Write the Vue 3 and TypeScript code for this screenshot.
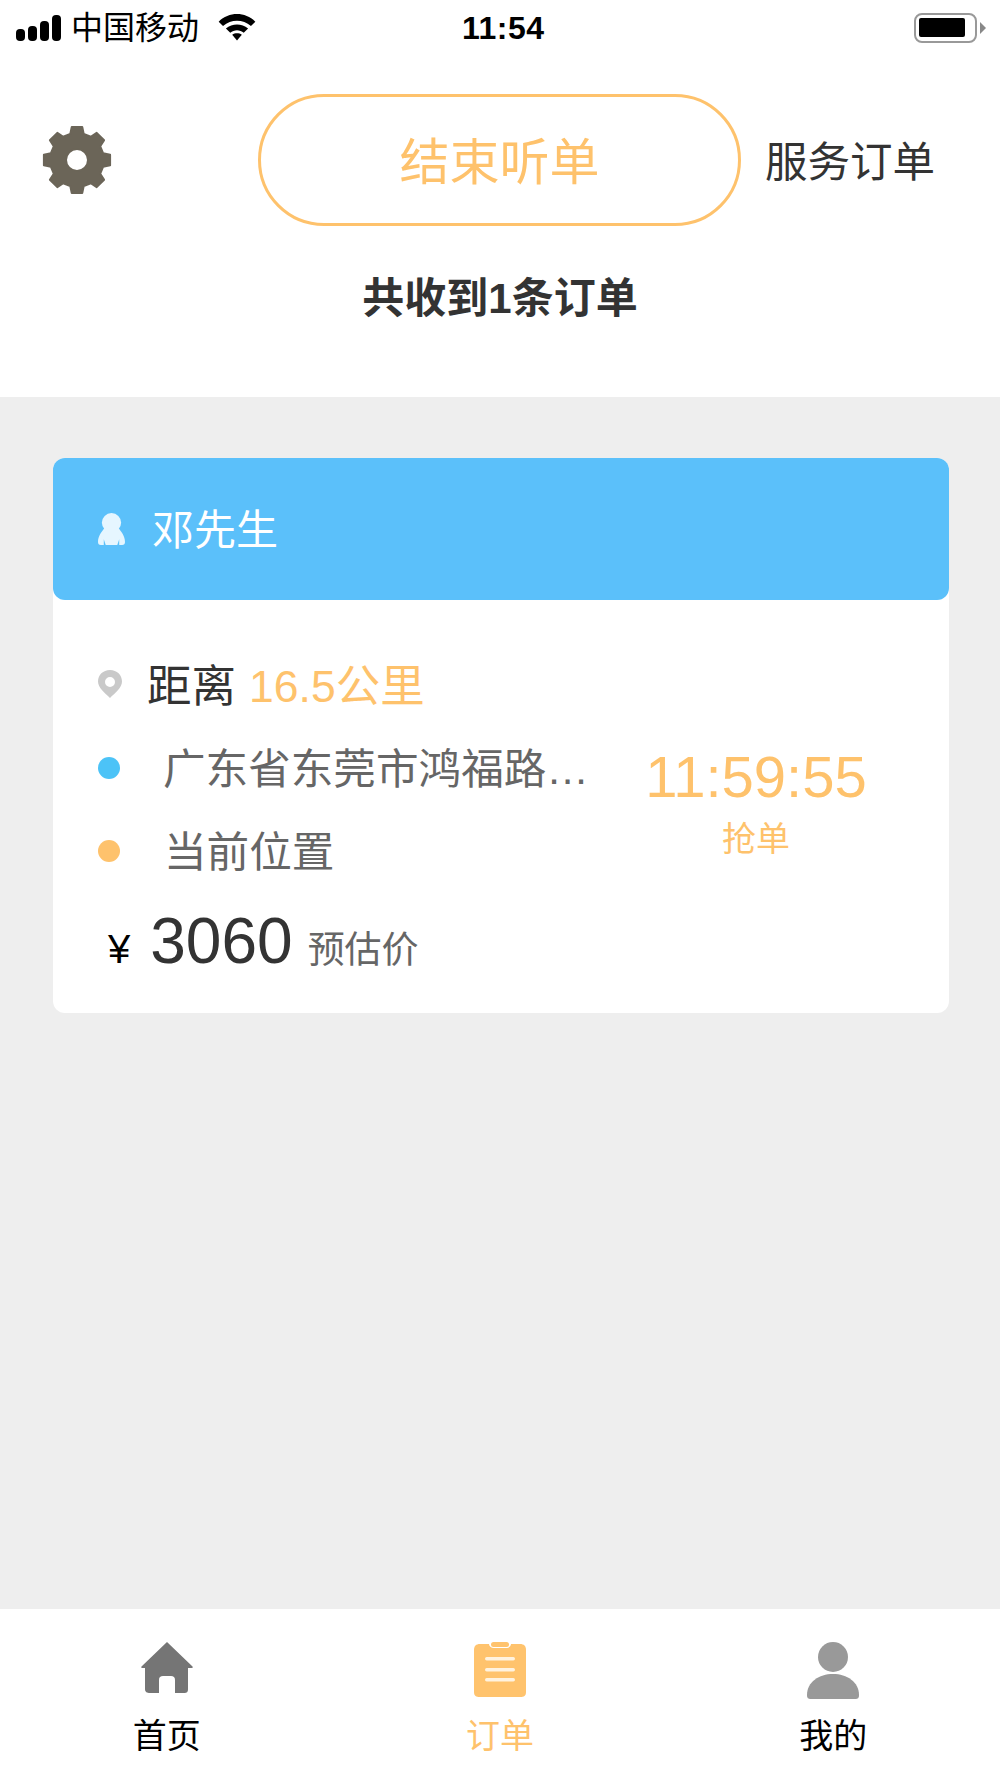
<template>
  <div class="page">
    <div class="status">
      <div class="status-left">
        <div class="signal">
          <i v-for="h in signalBars" :key="h" :style="{ height: h + 'px' }"></i>
        </div>
        <span class="carrier">中国移动</span>
        <svg class="wifi" viewBox="0 0 38 28" width="38" height="27">
          <path d="M0 8 C10.500 -2.500 27.500 -2.500 38 8 L33.500 12.500 C25 5 13 5 4.500 12.500 Z" fill="#000" />
          <path d="M7.500 15 C14 9.500 24 9.500 30.500 15 L26 19.500 C22 16 16 16 12 19.500 Z" fill="#000" />
          <path d="M14 21.500 C17 19.500 21 19.500 24 21.500 L19 27.500 Z" fill="#000" />
        </svg>
      </div>
      <span class="clock">11:54</span>
      <div class="battery-wrap">
        <div class="battery"><b></b></div>
        <i class="nub"></i>
      </div>
    </div>

    <div class="top">
      <div class="top-row">
        <svg class="gear" viewBox="-35 -35 70 70" width="70" height="70">
          <path :d="gearPath" fill="#6b6558" stroke="#6b6558" stroke-width="2" stroke-linejoin="round" fill-rule="evenodd" />
        </svg>
        <div class="stop-btn">结束听单</div>
        <span class="service">服务订单</span>
      </div>
      <p class="count">共收到1条订单</p>
    </div>

    <div class="main">
      <div class="card">
        <div class="card-head">
          <svg viewBox="0 0 28 33" width="27" height="32">
            <circle cx="14" cy="10" r="10" fill="#e6f6ff" />
            <path d="M8 14 C4 19 0 24 0 30 C0 32 1 33 3 33 L6 33 L6 27 L8 33 L20 33 L22 27 L22 33 L25 33 C27 33 28 32 28 30 C28 24 24 19 20 14 Z" fill="#e6f6ff" />
          </svg>
          <span>邓先生</span>
        </div>
        <div class="card-body">
          <div class="info">
            <div class="row distance">
              <svg viewBox="0 0 24 28" width="24" height="28">
                <path d="M12 0 C5 0 0 5 0 11.500 C0 18 7 23 12 28 C17 23 24 18 24 11.500 C24 5 19 0 12 0 Z M12 7 A5 5 0 1 1 12 17 A5 5 0 1 1 12 7 Z" fill="#c9c9c9" fill-rule="evenodd" />
              </svg>
              <span class="dist-label">距离</span>
              <span class="orange">16.5公里</span>
            </div>
            <div class="row place first">
              <i class="dot blue"></i>
              <span class="from">广东省东莞市鸿福路…</span>
            </div>
            <div class="row place">
              <i class="dot yellow"></i>
              <span class="to">当前位置</span>
            </div>
            <div class="row price">
              <span class="yen">¥</span>
              <span class="amount">3060</span>
              <span class="est">预估价</span>
            </div>
          </div>
          <div class="grab">
            <div class="timer">11:59:55</div>
            <div class="grab-text">抢单</div>
          </div>
        </div>
      </div>
    </div>

    <div class="tabs">
      <div class="tab">
        <svg viewBox="0 0 52 52" width="52" height="52" preserveAspectRatio="xMidYMin">
          <path d="M26 0 L51 24 C52.500 25.500 52 26 50 26 L47 26 L47 47 C47 50 46 51 43 51 L34 51 L34 38 C34 35 32.500 34 30 34 L22 34 C19.500 34 18 35 18 38 L18 51 L9 51 C6 51 4 50 4 47 L4 26 L2 26 C0 26 -0.500 25.500 1 24 Z" fill="#757575" />
        </svg>
        <span>首页</span>
      </div>
      <div class="tab active">
        <svg viewBox="0 0 52 56" width="52" height="56" preserveAspectRatio="xMidYMin">
          <path d="M6 2 L15 2 C15 4 17 6 20 6 L32 6 C35 6 37 4 37 2 L46 2 C50 2 52 4 52 8 L52 50 C52 54 50 55 46 55 L6 55 C2 55 0 54 0 50 L0 8 C0 4 2 2 6 2 Z" fill="#ffc36d" />
          <rect x="17" y="0" width="18" height="5" rx="2.500" fill="#ffc36d" />
          <rect x="11" y="15" width="30" height="3.500" rx="1.700" fill="#fff3e0" />
          <rect x="11" y="26" width="30" height="3.500" rx="1.700" fill="#fff3e0" />
          <rect x="11" y="36" width="30" height="3.500" rx="1.700" fill="#fff3e0" />
        </svg>
        <span>订单</span>
      </div>
      <div class="tab">
        <svg viewBox="0 0 52 58" width="52" height="58" preserveAspectRatio="xMidYMin">
          <circle cx="26" cy="15" r="15" fill="#999" />
          <path d="M26 32 C40 32 52 40 52 53 C52 56 51 57 48 57 L4 57 C1 57 0 56 0 53 C0 40 12 32 26 32 Z" fill="#999" />
        </svg>
        <span>我的</span>
      </div>
    </div>
  </div>
</template>

<script setup lang="ts">
const signalBars = [12, 15, 20, 26]

// 8 teeth around the settings gear
function buildGear(): string {
  const points: string[] = []
  const teeth = 8
  const step = (Math.PI * 2) / teeth
  for (let i = 0; i < teeth; i++) {
    const a = i * step - Math.PI / 2
    const parts: [number, number][] = [
      [27, a - step * 0.32],
      [33.5, a - step * 0.2],
      [33.5, a + step * 0.2],
      [27, a + step * 0.32],
    ]
    for (const [r, t] of parts) {
      points.push(`${(r * Math.cos(t)).toFixed(2)} ${(r * Math.sin(t)).toFixed(2)}`)
    }
  }
  const hole = 'M11 0 A11 11 0 1 0 -11 0 A11 11 0 1 0 11 0 Z'
  return `M${points.join(' L')} Z ${hole}`
}

const gearPath = buildGear()
</script>

<style>
html,
body {
  margin: 0;
  background: #fff;
}
</style>

<style scoped>
.page {
  width: 1000px;
  height: 1778px;
  display: flex;
  flex-direction: column;
  background: #fff;
  font-family: "Liberation Sans", "Noto Sans CJK SC", sans-serif;
  color: #333;
}

.status {
  height: 56px;
  padding: 0 14px 0 16px;
  box-sizing: border-box;
  display: flex;
  align-items: center;
  justify-content: space-between;
  position: relative;
  color: #000;
}
.status-left {
  display: flex;
  align-items: center;
}
.signal {
  display: flex;
  align-items: flex-end;
  gap: 3px;
  width: 45px;
}
.signal i {
  width: 9px;
  background: #000;
  border-radius: 4px;
}
.carrier {
  margin-left: 10px;
  font-size: 32px;
  line-height: 40px;
}
.wifi {
  margin-left: 19px;
  margin-top: -1px;
}
.clock {
  position: absolute;
  left: 462px;
  font-size: 32px;
  font-weight: 700;
  letter-spacing: 0.5px;
}
.battery-wrap {
  display: flex;
  align-items: center;
  gap: 3px;
}
.battery {
  width: 63px;
  height: 30px;
  box-sizing: border-box;
  border: 2.5px solid #999;
  border-radius: 8px;
  padding: 3px;
}
.battery b {
  display: block;
  width: 46px;
  height: 19px;
  background: #000;
  border-radius: 2px;
}
.nub {
  width: 0;
  height: 0;
  border-left: 6px solid #888;
  border-top: 6px solid transparent;
  border-bottom: 6px solid transparent;
}

.top {
  height: 341px;
  box-sizing: border-box;
  padding-top: 38px;
}
.top-row {
  display: flex;
  align-items: center;
}
.gear {
  margin-left: 42px;
}
.stop-btn {
  margin-left: 146px;
  width: 483px;
  height: 132px;
  box-sizing: border-box;
  border: 3px solid #fec26c;
  border-radius: 66px;
  padding-bottom: 4px;
  display: flex;
  align-items: center;
  justify-content: center;
  color: #fec26c;
  font-size: 50px;
}
.service {
  margin-left: 24px;
  padding-bottom: 4px;
  font-size: 42.500px;
  color: #333;
}
.count {
  margin: 48px 0 0;
  text-align: center;
  font-size: 42px;
  line-height: 50px;
  font-weight: 700;
}

.main {
  flex: 1;
  background: #eee;
  padding: 61px 51px 0 53px;
}
.card {
  width: 896px;
  height: 555px;
  background: #fff;
  border-radius: 12px;
}
.card-head {
  height: 142px;
  background: #5bc0fa;
  border-radius: 12px;
  padding-left: 45px;
  display: flex;
  align-items: center;
  color: #fff;
  font-size: 42px;
}
.card-head span {
  margin-left: 27px;
  padding-bottom: 6px;
}
.card-body {
  display: flex;
  padding: 41px 0 0 45px;
}
.info {
  width: 527px;
}
.row {
  display: flex;
  align-items: center;
  font-size: 42.600px;
  height: 83px;
}
.distance {
  height: 85px;
  font-size: 44.500px;
}
.dist-label,
.orange {
  padding-bottom: 3px;
}
.dist-label {
  margin-left: 25px;
}
.orange {
  margin-left: 13px;
  color: #fec26c;
}
.place {
  color: #666;
}
.from,
.to {
  padding-bottom: 4px;
}
.dot {
  width: 22px;
  height: 22px;
  border-radius: 50%;
}
.blue {
  background: #4cc3f7;
}
.yellow {
  background: #fec26c;
}
.from {
  margin-left: 43px;
}
.to {
  margin-left: 44px;
}
.price {
  height: 91px;
  align-items: baseline;
  padding-top: 12px;
  box-sizing: border-box;
}
.yen {
  margin-left: 10px;
  font-size: 40px;
  color: #000;
}
.amount {
  margin-left: 20px;
  font-size: 64px;
}
.est {
  margin-left: 15px;
  font-size: 37px;
  color: #666;
}
.grab {
  width: 262px;
  text-align: center;
  color: #fec26c;
  padding-top: 103px;
}
.timer {
  font-size: 58px;
  line-height: 66px;
}
.grab-text {
  font-size: 34px;
  line-height: 44px;
  margin-top: 7px;
}

.tabs {
  height: 169px;
  display: flex;
  background: #fff;
  box-sizing: border-box;
  padding-top: 33px;
}
.tab {
  flex: 1;
  display: flex;
  flex-direction: column;
  align-items: center;
  color: #000;
  font-size: 34px;
}
.tab svg {
  height: 58px;
}
.tab span {
  margin-top: 12px;
  line-height: 48px;
}
.tab.active {
  color: #fec26c;
}
</style>
